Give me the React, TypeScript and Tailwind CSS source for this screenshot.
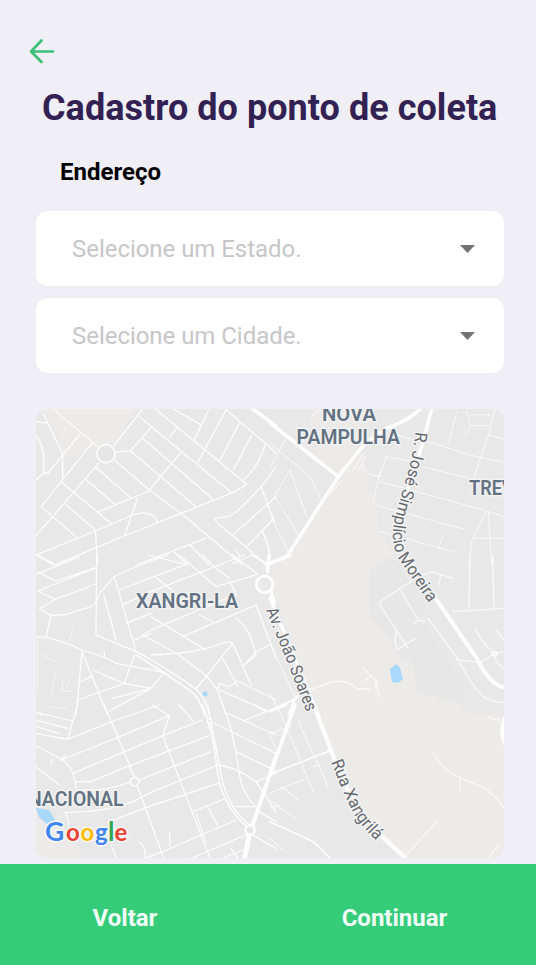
import React from 'react';

const label = {
  fontFamily: 'Roboto, "Liberation Sans", sans-serif',
  paintOrder: 'stroke' as const,
};

function ArrowLeft() {
  return (
    <svg className="block h-[26px] w-[26px]" viewBox="0 0 26 26" fill="none" stroke="#3bbf79" strokeWidth="2.7" strokeLinecap="round" strokeLinejoin="round">
      <path d="M24 13.500H2M12.500 2.500L2 13.500l10.500 10.500" />
    </svg>
  );
}

function SelectBox({ text }: { text: string }) {
  return (
    <button className="flex h-[75px] w-full items-center justify-between rounded-xl bg-white pl-9 pr-[29px]">
      <span className="text-[24px] leading-none font-normal tracking-[-0.04px] text-[#c6c6c8]">{text}</span>
      <svg className="h-[8px] w-[15px]" viewBox="0 0 15 8">
        <path d="M0 0h15L7.5 8z" fill="#727272" />
      </svg>
    </button>
  );
}

function MapView() {
  return (
    <svg className="block h-[449px] w-[468px] rounded-xl bg-[#e8e8e8]" viewBox="0 0 468 449" strokeLinecap="round" strokeLinejoin="round">
      {/* parks and open land */}
      <g fill="#ecebe8">
        <path d="M251 148L302 68L327 43L329 63L341 96L342 123L359 146L341 166L334 206L351 226L361 246L377 256L381 283L421 293L434 305L468 306V449H371L345 425L310 389L297 343L281 299L255 230L234 173L237 158Z" />
        <path d="M9 0H100L78 34L62 36L30 50L18 20Z" />
        <path d="M275 0H340L325 35L302 68L270 42Z" opacity=".6" />
        <path d="M0 402L15 408L40 430L45 449H0Z" opacity=".8" />
      </g>
      <path d="M334 160L359 146L380 190L400 235L430 280L421 293L381 283L377 256L351 226L334 206Z" fill="#e7e7e7" />
      <g fill="#a8d8fb">
        <path d="M354 260L360 255L364 259L367 270L362 274L356 273Z" />
        <circle cx="169" cy="285" r="2.5" />
        <path d="M0 399L13 401L19 411L11 415L3 408Z" />
      </g>

      <g fill="none" stroke="#fdfdfd" strokeWidth="3.8">
        {/* north west streets */}
        <g transform="translate(0 -4) scale(.33333)">
          <path d="M22 25L80 148V225M0 50L35 55M108 60L185 125M35 205L130 90M170 112L15 305L120 395M188 175L0 392M235 120L320 12M237 142L283 137L348 65M235 165L340 255L435 325L620 480" />
          <path d="M0 90Q30 130 22 205L0 225M22 205H35" strokeWidth="6" opacity=".8" />
          <path d="M50 12L108 60" opacity=".8" />
          <path d="M283 137L480 305M320 100L530 282M310 35L585 262M358 12L632 238M340 255L435 142M400 97L425 65M412 12L492 58M518 15L475 105M570 15L485 173M568 12L700 125L720 145" />
          <path d="M610 55L552 165M648 88L592 195M687 120Q665 190 622 225M720 185Q690 230 675 245Q600 330 575 335L535 340Q535 350 600 400L690 480" />
          <path d="M632 238L592 262L435 325L265 393L188 425L60 478M0 450L178 378L290 330Q345 310 365 350M0 448L60 480M178 375L185 480M75 230L225 355M88 297L178 375M148 222L237 298M180 188L285 278M188 320L340 258M305 280L265 393" />
          <path d="M300 480L510 400M415 442L455 480M462 420L520 480M590 475L650 450M600 435L612 455M675 245L715 350M720 275L590 390M710 345L632 425M680 380Q705 430 700 480" />
          <circle cx="210" cy="146" r="27" fill="#e5e5e6" strokeWidth="5" />
          <path d="M650 12L720 62" strokeWidth="11" />
        </g>

        {/* north east streets */}
        <g transform="translate(234 -4) scale(.33333)">
          <path d="M0 54L205 215" strokeWidth="11" />
          <path d="M0 475L50 455L205 215L285 115L350 70Q420 45 450 12" strokeWidth="11" />
          <path d="M485 12L465 90Q450 140 432 200L378 350Q365 400 400 450L430 480" strokeWidth="10" />
          <path d="M50 95L0 190M0 115L120 215L150 275M60 195L15 270M60 195L110 335M15 275L85 390M0 330L55 440M150 12L120 40M75 130L110 100M180 270L215 225M250 195L285 140M265 195L290 150M280 180Q280 215 335 213" strokeWidth="3" opacity=".85" />
          <path d="M345 155L420 168M455 185L605 222L595 222M330 230L650 318L702 335M315 300L580 372M325 378L555 442M520 390L505 430M560 20L535 118M470 108L600 150L702 172M675 12L655 90L610 220M655 90L702 103M590 20L602 65L585 95M600 30H660M605 62H660M650 320L605 410L597 480M655 320L665 480M610 400H702M330 200L310 290M350 155L325 220M380 90L430 105" strokeWidth="3" opacity=".75" />
        </g>

        {/* west streets */}
        <g transform="translate(0 146) scale(.33333)">
          <path d="M0 0L52 28M182 0L180 240L300 290M0 58L130 5M5 50L58 78L180 38M5 108L180 38M5 108L58 133L180 87M58 133L10 162L45 182L90 178L165 155Q185 140 190 115L235 65Q270 45 395 0M45 182L30 248M0 245Q50 245 138 285Q210 305 240 325M235 65L300 290M203 118L240 255M248 105L450 28M258 150L345 110M270 205L345 175M295 255L345 235" />
          <path d="M335 0L450 28M430 0L540 95M500 0L540 40L580 70M360 68L415 110M345 110L625 0M590 0L665 58M540 95L665 58M490 180L530 200M345 185L510 285M600 118L345 225L320 240L425 297M440 245L660 150M580 80L600 115M645 0L700 28M345 300Q480 295 560 265Q575 258 590 265M425 297L510 362L545 405L570 480M590 265L480 402" />
          <path d="M300 290Q370 325 480 402Q510 430 520 480M300 300Q380 350 470 412Q495 440 505 480" strokeWidth="4.500" />
          <path d="M138 290L120 480M138 290L215 480M170 345L265 385L295 300M135 380L170 362M125 435L265 385M230 430L345 400L385 352L240 325M265 385L345 400M205 290V310M560 310L605 395M590 265L645 390M605 378L580 395L550 385L545 405M605 378L720 435M600 190Q640 215 660 300L625 330M660 150L720 310M625 330L660 290L700 270M550 405L690 465M220 468L345 400M0 470L15 480" />
          <path d="M15 300L58 318M58 350L45 420M80 375L78 410L110 408M90 400L100 380M40 455L95 462M110 220L100 260M5 250V410" strokeWidth="3" opacity=".6" />
          <path d="M700 0L695 50M705 110L715 145" strokeWidth="11" />
          <circle cx="686" cy="88" r="25" fill="#e9e9e9" strokeWidth="9" />
        </g>

        {/* east streets */}
        <g transform="translate(234 146) scale(.33333)">
          <path d="M-10 30L60 0" strokeWidth="11" />
          <path d="M400 0L500 135L620 310Q660 390 702 397" strokeWidth="12" />
          <path d="M0 130L100 370L145 480" strokeWidth="10" />
          <path d="M0 468L75 432L100 405M75 432L55 480" strokeWidth="7" />
          <path d="M445 65L330 140V150L415 280M380 225Q370 260 382 283L435 250M390 105L445 195L430 205M445 195L465 200M475 190L565 315Q610 400 640 425Q670 442 702 443M560 315L630 322L672 297L702 290M672 297Q680 330 702 342M445 65L485 50L550 70M513 60L505 90M600 0L597 160M668 0L672 160M550 170L702 160M615 220Q640 270 665 285M680 225L702 255" strokeWidth="4" opacity=".75" />
          <circle cx="673" cy="296" r="7" strokeWidth="4" />
          <path d="M100 410L190 380Q225 372 265 402H298M280 338L315 375L328 425M285 378L302 362M315 395L322 375" strokeWidth="4" opacity=".75" />
          <path d="M0 265L75 425M0 415L30 475" strokeWidth="3" opacity=".8" />
        </g>

        {/* south west streets */}
        <g transform="translate(0 296) scale(.33333)">
          <path d="M0 22L110 48L125 0M110 48L95 103L240 45L370 0M0 45L95 70M0 65L70 85M0 85L95 103M205 0L295 215M75 165L245 98L400 32M110 205L380 92L500 45M120 230H165L265 188L520 92M125 255Q210 260 280 232M310 225L525 140M345 262L545 180M85 322Q200 325 290 290L345 262M215 352L330 308L548 235M470 320L565 282M400 32L380 92L530 480M350 0L400 32M430 0L475 52M305 245L385 465" />
          <path d="M0 122L80 165Q115 190 120 250M0 185L70 240M48 160L45 180M90 150L75 165M90 325L100 360M225 420L245 465M310 412Q335 430 325 460L380 440L600 345M330 460L380 440M455 465L640 385M515 305L545 362M480 325L510 410M400 380L402 420" strokeWidth="3.500" />
          <path d="M500 0Q530 80 540 170Q545 240 575 295Q600 340 640 370M515 0L550 180Q560 250 585 295Q610 340 650 365" strokeWidth="4.500" />
          <path d="M560 0Q595 80 610 210Q620 270 660 305M520 48L720 145M575 25L720 90M630 45L720 8M600 140L720 198M545 180Q600 185 660 230L720 320M660 230L720 205M600 305H660M670 320L720 350M650 390L720 430M655 0L690 20M585 430L610 465M560 460L620 435" strokeWidth="3.800" />
          <path d="M720 155L648 365" strokeWidth="12" />
          <path d="M642 380L625 462" strokeWidth="15" />
          <circle cx="296" cy="230" r="13" fill="#e8e8e8" strokeWidth="5" />
          <circle cx="520" cy="48" r="6" fill="#e8e8e8" strokeWidth="4" />
          <circle cx="642" cy="375" r="14" fill="#e8e8e8" strokeWidth="7" />
        </g>

        {/* south east streets */}
        <g transform="translate(234 296) scale(.33333)">
          <path d="M75 0L0 210" strokeWidth="11" />
          <path d="M135 10L192 160L240 270L320 380L405 458" strokeWidth="13" />
          <path d="M0 208L185 135M0 20L50 0M0 350L130 410L180 460" strokeWidth="5" />
          <path d="M25 10L130 260M85 50L175 245M0 85L65 65M0 90L25 150M0 265L105 222M35 245L85 285M0 285L75 340M0 400L40 435M130 185L150 180M0 305H25" strokeWidth="3.500" opacity=".7" />
          <path d="M490 145Q520 200 575 220L640 248Q675 270 702 310M571 215V255M410 450L500 348M655 38L690 45M655 460L685 420" strokeWidth="4" opacity=".65" />
          <path d="M704 40Q690 75 704 115" strokeWidth="12" />
        </g>
      </g>

      <defs>
        <path id="simplicio" d="M379.5 23Q378 39 373.5 58L361 101Q355 121 357.5 134Q359 146 367 156L395 197" />
        <path id="soares" d="M230 201L240 226L250 250L255 263L272 307" />
        <path id="xangrila" d="M295 353L303 373Q313 397 321 410Q329 421 343 434" />
      </defs>
      <g style={label} fill="#666a70" stroke="#f3f3f3" strokeWidth="3" fontSize="17">
        <text textLength="184" lengthAdjust="spacingAndGlyphs"><textPath href="#simplicio">R. José Simplício Moreira</textPath></text>
        <text textLength="110" lengthAdjust="spacingAndGlyphs"><textPath href="#soares">Av. João Soares</textPath></text>
        <text textLength="92" lengthAdjust="spacingAndGlyphs"><textPath href="#xangrila">Rua Xangrilá</textPath></text>
      </g>
      <g style={label} fill="#637282" stroke="#f3f3f3" strokeWidth="3" fontSize="20" fontWeight="600">
        <text x="286" y="11.700" textLength="54" lengthAdjust="spacingAndGlyphs">NOVA</text>
        <text x="260.500" y="34.500" textLength="103.500" lengthAdjust="spacingAndGlyphs">PAMPULHA</text>
        <text x="433" y="86" textLength="57" lengthAdjust="spacingAndGlyphs">TREVO</text>
        <text x="100" y="198.500" textLength="102" lengthAdjust="spacingAndGlyphs">XANGRI-LA</text>
        <text x="-8" y="396.500" textLength="95.500" lengthAdjust="spacingAndGlyphs">NACIONAL</text>
      </g>
      <text y="432" fontSize="24" fontWeight="700" stroke="#f8f8f8" strokeWidth="3" style={{ fontFamily: 'Lato, sans-serif', paintOrder: 'stroke' }}>
        <tspan x="9" fontSize="26.500" fill="#4285f4">G</tspan><tspan x="30" fill="#ea4335">o</tspan><tspan x="44.500" fill="#fbbc05">o</tspan><tspan x="59" fill="#4285f4">g</tspan><tspan x="72" fontSize="26" fill="#34a853">l</tspan><tspan x="78.500" fill="#ea4335">e</tspan>
      </text>
    </svg>
  );
}

export default function App() {
  return (
    <div className="flex h-[965px] w-[536px] flex-col overflow-hidden bg-[#f0eff5] font-['Roboto','Liberation_Sans',sans-serif]">
      <header className="pl-[29px] pt-[38px]">
        <ArrowLeft />
      </header>
      <main className="flex flex-1 flex-col pr-8 pl-9">
        <h1 className="mt-[23px] ml-[6px] whitespace-nowrap text-[36px] leading-[42px] font-bold tracking-[0.04px] text-[#322153]">Cadastro do ponto de coleta</h1>
        <h2 className="mt-[29px] ml-6 text-[24px] leading-[28px] font-bold text-black">Endereço</h2>
        <div className="mt-[25px] flex flex-col gap-3">
          <SelectBox text="Selecione um Estado." />
          <SelectBox text="Selecione um Cidade." />
        </div>
        <div className="mt-9">
          <MapView />
        </div>
      </main>
      <footer className="grid h-[101px] grid-cols-2 bg-[#34cb79] text-[24px] font-bold text-[#f0fff8]">
        <button className="pr-[18px] pt-[6px]">Voltar</button>
        <button className="pt-[6px] pr-[15px]">Continuar</button>
      </footer>
    </div>
  );
}
